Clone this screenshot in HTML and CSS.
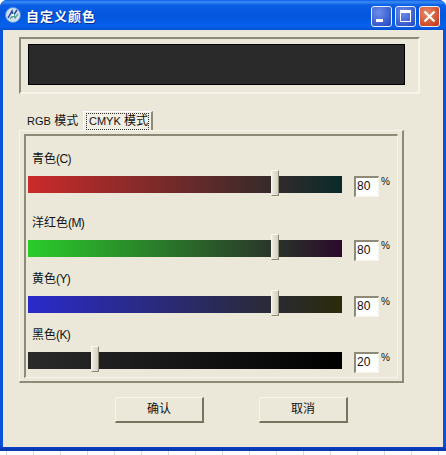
FILE: index.html
```html
<html>
  <head>
    <title>自定义颜色</title>
    <link rel="stylesheet" href="styles.css">
  </head>
  <body>
    <div id="window">
      <div id="titlebar">
        <svg class="app_icon" width="16" height="16" viewBox="0 0 16 16">
          <circle cx="8" cy="8" r="7.5" fill="#d4dfec" stroke="#4f92e6" stroke-width="1"/>
          <path d="M3 11 L7 4 L8 9 L12 3" fill="none" stroke="#24489e" stroke-width="1.5"/>
          <path d="M5 12 L9 7 L10 11 L13 7" fill="none" stroke="#3d9a8a" stroke-width="1.2"/>
          <circle cx="8" cy="8" r="1.2" fill="#fff"/>
        </svg>
        <span class="caption">自定义颜色</span>
        <div class="caption_buttons">
          <div class="cap_btn"><span class="min_glyph"></span></div>
          <div class="cap_btn"><span class="max_glyph"></span></div>
          <div class="cap_btn close">
            <svg width="13" height="13" viewBox="0 0 13 13"><path d="M1.5 1.5 L11.5 11.5 M11.5 1.5 L1.5 11.5" stroke="#fff" stroke-width="2.2"/></svg>
          </div>
        </div>
      </div>

      <div id="client">
        <div id="preview_group">
          <div id="preview"></div>
        </div>

        <div id="tabs">
          <span class="tab"><span class="latin">RGB</span> 模式</span>
          <span class="tab active"><span class="focus"><span class="latin">CMYK</span> 模式</span></span>
        </div>

        <div id="tab_frame">
          <div id="tab_page">
            <div class="row first">
              <div class="label">青色<span class="paren">(C)</span></div>
              <div class="control">
                <div class="track cyan"><div class="thumb" style="left:243px"></div></div>
                <div class="value">80</div><span class="percent">%</span>
              </div>
            </div>
            <div class="row">
              <div class="label">洋红色<span class="paren">(M)</span></div>
              <div class="control">
                <div class="track magenta"><div class="thumb" style="left:243px"></div></div>
                <div class="value">80</div><span class="percent">%</span>
              </div>
            </div>
            <div class="row tight">
              <div class="label">黄色<span class="paren">(Y)</span></div>
              <div class="control">
                <div class="track yellow"><div class="thumb" style="left:243px"></div></div>
                <div class="value">80</div><span class="percent">%</span>
              </div>
            </div>
            <div class="row tight">
              <div class="label">黑色<span class="paren">(K)</span></div>
              <div class="control">
                <div class="track black"><div class="thumb" style="left:63px"></div></div>
                <div class="value">20</div><span class="percent">%</span>
              </div>
            </div>
          </div>
        </div>

        <div id="buttons">
          <div class="button">确认</div>
          <div class="button">取消</div>
        </div>
      </div>
    </div>
    <div id="below"></div>
  </body>
</html>
```

FILE: styles.css
```css
body {
    margin: 0;
    background: #fff;
    font-family: "Liberation Sans", "Noto Sans CJK SC", sans-serif;
    font-size: 12px;
    color: #111;
    overflow: hidden;
}
.latin {
    font-size: 11px;
}
.paren {
    letter-spacing: -0.6px;
}
#window {
    width: 446px;
    height: 451px;
    display: flex;
    flex-direction: column;
    background: linear-gradient(#0a50d8 445px, #0a38b4 449px);
    border-radius: 7px 7px 0 0;
    box-sizing: border-box;
    padding: 0 3px 4px 3px;
}
#titlebar {
    height: 30px;
    margin: 0 -3px;
    padding: 0 6px 0 5px;
    display: flex;
    align-items: center;
    border-radius: 7px 7px 0 0;
    background: linear-gradient(#0a5ee8 0, #3b8cf4 2px, #0a5fe6 5px, #0355dc 14px, #0660ea 26px, #0352d2 30px);
}
.caption {
    margin-left: 5px;
    color: #fff;
    font-size: 13px;
    font-weight: bold;
    letter-spacing: 1px;
    text-shadow: 1px 1px 0 #0a2f90;
}
.caption_buttons {
    margin-left: auto;
    display: flex;
    gap: 3px;
    margin-top: 2px;
}
.cap_btn {
    width: 19px;
    height: 19px;
    border: 1px solid #e8eefc;
    border-radius: 3px;
    background: radial-gradient(circle at 35% 30%, #6c8eea, #2c50c8 85%);
    display: flex;
    align-items: center;
    justify-content: center;
}
.cap_btn.close {
    background: radial-gradient(circle at 35% 30%, #e88a6c, #c8401c 85%);
}
.min_glyph {
    width: 7px;
    height: 3px;
    background: #fff;
    margin: 9px 5px 0 0;
}
.max_glyph {
    width: 9px;
    height: 8px;
    border: 1px solid #fff;
    border-top-width: 3px;
}
#client {
    flex: 1;
    background: #ebe8da;
    padding: 7px 0 0 16px;
}
#preview_group {
    width: 390px;
    height: 48px;
    border-top: 2px solid #8d8a78;
    border-left: 2px solid #8d8a78;
    border-right: 2px solid #f6f5ec;
    border-bottom: 2px solid #f6f5ec;
    padding: 5px 0 0 7px;
}
#preview {
    width: 375px;
    height: 39px;
    background: #2a2a2a;
    border: 1px solid #000;
}
#tabs {
    display: flex;
    align-items: flex-end;
    height: 19px;
    margin: 17px 0 0 4px;
}
.tab {
    padding: 0 4px 1px 4px;
    width: 52px;
    white-space: nowrap;
    line-height: 16px;
}
.tab.active {
    width: 70px;
    height: 19px;
    box-sizing: border-box;
    padding: 1px 2px;
    background: #f1efe4;
    border: 1px solid #fff;
    border-right: 2px solid #8d8a78;
    border-bottom: none;
}
.focus {
    display: block;
    height: 15px;
    border: 1px dotted #333;
    padding: 0 2px;
    line-height: 14px;
}
#tab_frame {
    width: 385px;
    height: 253px;
    box-sizing: border-box;
    border-top: 1px solid #f6f5ec;
    border-left: 1px solid #f6f5ec;
    border-bottom: 2px solid #8d8a78;
    border-right: 2px solid #8d8a78;
    padding: 3px 4px;
}
#tab_page {
    height: 244px;
    box-sizing: border-box;
    border-top: 2px solid #8d8a78;
    border-left: 2px solid #8d8a78;
    border-bottom: 1px solid #f6f5ec;
    border-right: 1px solid #f6f5ec;
    padding-left: 2px;
}
.row {
    margin-top: 18px;
}
.row.first {
    margin-top: 15px;
}
.row.tight {
    margin-top: 10px;
}
.label {
    margin-left: 4px;
    height: 16px;
    line-height: 16px;
}
.control {
    display: flex;
    align-items: flex-start;
    margin-top: 9px;
    height: 21px;
}
.track {
    width: 314px;
    height: 17px;
    position: relative;
    flex: none;
}
.cyan { background: linear-gradient(90deg, #cc2a2a, #0a2a2a); }
.magenta { background: linear-gradient(90deg, #2acc2a, #2a0a2a); }
.yellow { background: linear-gradient(90deg, #2a2acc, #2a2a0a); }
.black { background: linear-gradient(90deg, #2a2a2a, #000); }
.thumb {
    position: absolute;
    top: -6px;
    width: 8px;
    height: 26px;
    box-sizing: border-box;
    background: linear-gradient(90deg, #eeece0, #d4d1c0);
    border: 1px solid #f8f7f0;
    border-right-color: #8d8a78;
    border-bottom-color: #8d8a78;
}
.value {
    width: 25px;
    height: 21px;
    margin-left: 12px;
    box-sizing: border-box;
    background: #fff;
    border: 1px solid #f6f5ec;
    border-top: 2px solid #8d8a78;
    border-left: 2px solid #8d8a78;
    padding-left: 1px;
    line-height: 17px;
}
.percent {
    margin-left: 2px;
    font-size: 10px;
    line-height: 12px;
}
#buttons {
    display: flex;
    gap: 55px;
    margin: 14px 0 0 96px;
}
.button {
    width: 89px;
    height: 26px;
    box-sizing: border-box;
    text-align: center;
    line-height: 23px;
    background: #ebe8da;
    border: 1px solid #f6f5ec;
    border-right: 2px solid #77745f;
    border-bottom: 2px solid #77745f;
}
#below {
    height: 4px;
    background-image: repeating-linear-gradient(90deg, #d8d8d8 0, #d8d8d8 1px, #fff 1px, #fff 27px);
    background-position: 6px 0;
}
```
